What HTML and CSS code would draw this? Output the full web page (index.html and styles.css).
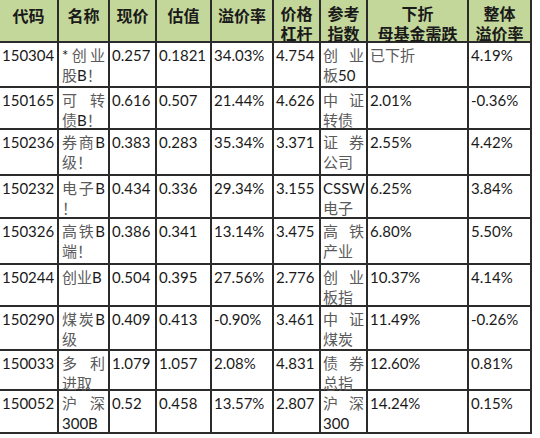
FILE: index.html
```html
<!DOCTYPE html>
<html lang="zh">
<head>
<meta charset="utf-8">
<title>分级B溢价率</title>
<link rel="stylesheet" href="styles.css">
</head>
<body>
<div class="sheet">
  <div class="h">代码</div>
  <div class="h">名称</div>
  <div class="h">现价</div>
  <div class="h">估值</div>
  <div class="h">溢价率</div>
  <div class="h two">价格<br>杠杆</div>
  <div class="h two">参考<br>指数</div>
  <div class="h two">下折<br>母基金需跌</div>
  <div class="h two">整体<br>溢价率</div>

  <div class="c">150304</div>
  <div class="c nm"><div class="jl"><span>*</span><span class="zh">创</span><span class="zh">业</span></div><div><span class="zh">股</span>B<span class="zh">！</span></div></div>
  <div class="c">0.257</div>
  <div class="c">0.1821</div>
  <div class="c">34.03%</div>
  <div class="c">4.754</div>
  <div class="c rf"><div class="jl"><span class="zh">创</span><span class="zh">业</span></div><div><span class="zh">板</span>50</div></div>
  <div class="c"><span class="zh">已下折</span></div>
  <div class="c">4.19%</div>

  <div class="c">150165</div>
  <div class="c nm"><div class="jl"><span class="zh">可</span><span class="zh">转</span></div><div><span class="zh">债</span>B<span class="zh">！</span></div></div>
  <div class="c">0.616</div>
  <div class="c">0.507</div>
  <div class="c">21.44%</div>
  <div class="c">4.626</div>
  <div class="c rf"><div class="jl"><span class="zh">中</span><span class="zh">证</span></div><div><span class="zh">转债</span></div></div>
  <div class="c">2.01%</div>
  <div class="c">-0.36%</div>

  <div class="c">150236</div>
  <div class="c nm"><div class="jl"><span class="zh">券</span><span class="zh">商</span><span>B</span></div><div><span class="zh">级！</span></div></div>
  <div class="c">0.383</div>
  <div class="c">0.283</div>
  <div class="c">35.34%</div>
  <div class="c">3.371</div>
  <div class="c rf"><div class="jl"><span class="zh">证</span><span class="zh">券</span></div><div><span class="zh">公司</span></div></div>
  <div class="c">2.55%</div>
  <div class="c">4.42%</div>

  <div class="c">150232</div>
  <div class="c nm"><div class="jl"><span class="zh">电</span><span class="zh">子</span><span>B</span></div><div><span class="zh">！</span></div></div>
  <div class="c">0.434</div>
  <div class="c">0.336</div>
  <div class="c">29.34%</div>
  <div class="c">3.155</div>
  <div class="c rf"><div>CSSW</div><div><span class="zh">电子</span></div></div>
  <div class="c">6.25%</div>
  <div class="c">3.84%</div>

  <div class="c">150326</div>
  <div class="c nm"><div class="jl"><span class="zh">高</span><span class="zh">铁</span><span>B</span></div><div><span class="zh">端！</span></div></div>
  <div class="c">0.386</div>
  <div class="c">0.341</div>
  <div class="c">13.14%</div>
  <div class="c">3.475</div>
  <div class="c rf"><div class="jl"><span class="zh">高</span><span class="zh">铁</span></div><div><span class="zh">产业</span></div></div>
  <div class="c">6.80%</div>
  <div class="c">5.50%</div>

  <div class="c">150244</div>
  <div class="c nm"><div><span class="zh">创业</span>B</div></div>
  <div class="c">0.504</div>
  <div class="c">0.395</div>
  <div class="c">27.56%</div>
  <div class="c">2.776</div>
  <div class="c rf"><div class="jl"><span class="zh">创</span><span class="zh">业</span></div><div><span class="zh">板指</span></div></div>
  <div class="c">10.37%</div>
  <div class="c">4.14%</div>

  <div class="c">150290</div>
  <div class="c nm"><div class="jl"><span class="zh">煤</span><span class="zh">炭</span><span>B</span></div><div><span class="zh">级</span></div></div>
  <div class="c">0.409</div>
  <div class="c">0.413</div>
  <div class="c">-0.90%</div>
  <div class="c">3.461</div>
  <div class="c rf"><div class="jl"><span class="zh">中</span><span class="zh">证</span></div><div><span class="zh">煤炭</span></div></div>
  <div class="c">11.49%</div>
  <div class="c">-0.26%</div>

  <div class="c">150033</div>
  <div class="c nm"><div class="jl"><span class="zh">多</span><span class="zh">利</span></div><div><span class="zh">进取</span></div></div>
  <div class="c">1.079</div>
  <div class="c">1.057</div>
  <div class="c">2.08%</div>
  <div class="c">4.831</div>
  <div class="c rf"><div class="jl"><span class="zh">债</span><span class="zh">券</span></div><div><span class="zh">总指</span></div></div>
  <div class="c">12.60%</div>
  <div class="c">0.81%</div>

  <div class="c">150052</div>
  <div class="c nm"><div class="jl"><span class="zh">沪</span><span class="zh">深</span></div><div>300B</div></div>
  <div class="c">0.52</div>
  <div class="c">0.458</div>
  <div class="c">13.57%</div>
  <div class="c">2.807</div>
  <div class="c rf"><div class="jl"><span class="zh">沪</span><span class="zh">深</span></div><div>300</div></div>
  <div class="c">14.24%</div>
  <div class="c">0.15%</div>
</div>
</body>
</html>
```

FILE: styles.css
```css
html, body {
  margin: 0;
  padding: 0;
  background: #ffffff;
}

.sheet {
  display: grid;
  grid-template-columns: 57px 49px 45px 53px 60px 45px 45px 99px 61px;
  grid-template-rows: 41px 43px 40px 44px 41px 44px 40px 42px 38px 41px;
  gap: 2px;
  padding: 0 2px 2px 0;
  width: max-content;
  background: #2b2b2b;
  font-family: "Lato", "Noto Sans CJK SC", sans-serif;
  font-size: 15px;
  color: #1a1a1a;
}

.h {
  background: #c4d79b;
  font-family: "Noto Sans CJK SC", sans-serif;
  font-weight: bold;
  font-size: 16px;
  line-height: 20px;
  text-align: center;
  padding-top: 5px;
  color: #1a1a1a;
  white-space: nowrap;
}

.h.two {
  padding-top: 3px;
}

.c {
  background: #ffffff;
  line-height: 20px;
  padding: 2px 2px 0 2px;
  white-space: nowrap;
}

.c > div {
  height: 20px;
}

.c.nm {
  padding-left: 3px;
  padding-right: 3px;
}

.jl {
  display: flex;
  justify-content: space-between;
}

.zh {
  font-family: "Noto Sans CJK SC", sans-serif;
  font-size: 15px;
  line-height: 20px;
  vertical-align: top;
  color: #5a5a5a;
}
```
